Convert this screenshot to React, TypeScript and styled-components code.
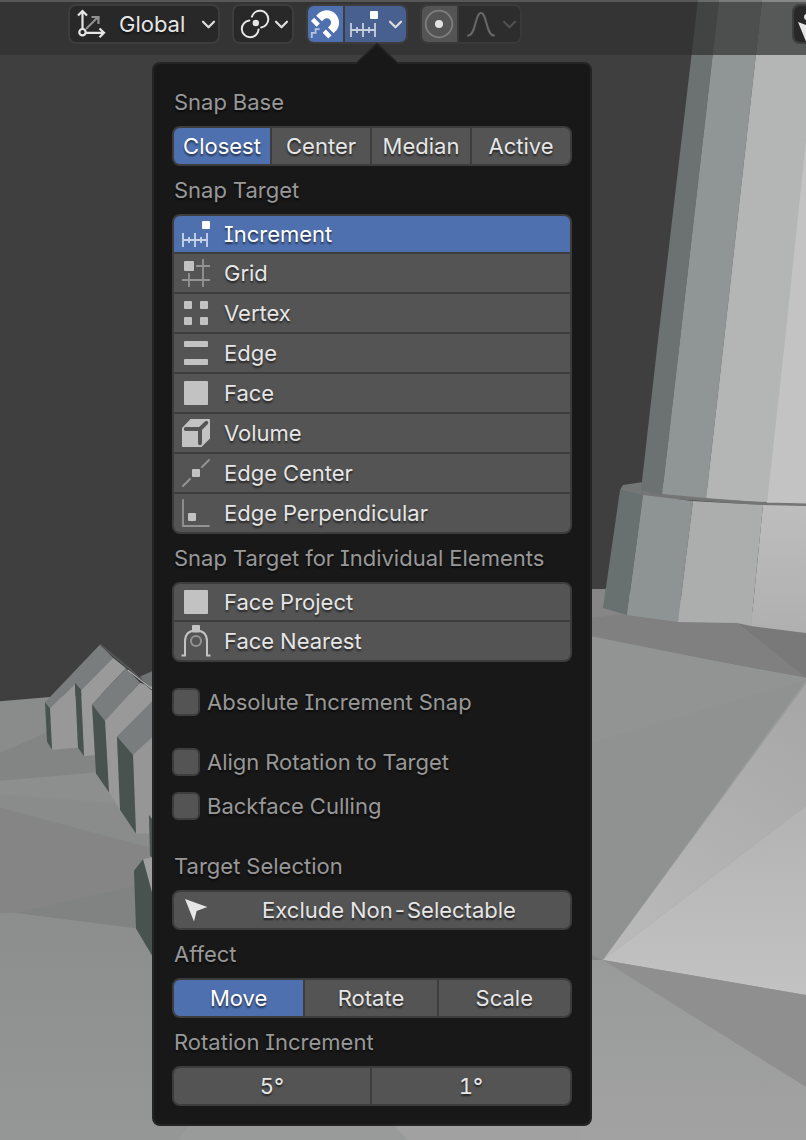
import React, { useState } from "react";
import styled, { createGlobalStyle, css } from "styled-components";

const GlobalStyle = createGlobalStyle`
  *, *::before, *::after { box-sizing: border-box; }
  body {
    margin: 0;
    background: #3f3f3f;
    font-family: Inter, "Liberation Sans", sans-serif;
    font-size: 22px;
    line-height: 28px;
    font-feature-settings: "tnum" 1, "cv08" 1;
    font-optical-sizing: auto;
    color: #e6e6e6;
  }
  button, input { font: inherit; font-feature-settings: inherit; color: inherit; }
`;

const outline = "#3d3d3d";
const accent = "#4f70af";
const field = "#545454";
const shadow = "0 2px 2px rgba(0, 0, 0, 0.6)";

const Page = styled.div`
  position: relative;
  isolation: isolate;
  min-height: 100vh;
  overflow: hidden;
`;

const SceneSvg = styled.svg`
  position: absolute;
  inset: 0;
  width: 100%;
  height: 100%;
  z-index: -1;
`;

const Toolbar = styled.header`
  display: flex;
  gap: 12px;
  height: 55px;
  padding: 2px 0 0 68px;
  border-top: 2px solid rgba(104, 104, 104, 0.6);
  background: rgba(48, 48, 48, 0.7);
  background-clip: padding-box;
`;

const ToolGroup = styled.div<{ $faded?: boolean }>`
  display: flex;
  flex: none;
  height: 40px;
  border: 2px solid ${(p) => (p.$faded ? "#3a3a3a" : outline)};
  border-radius: 8px;
  overflow: hidden;
  background: ${(p) => (p.$faded ? "#3a3a3a" : outline)};
  gap: 2px;
`;

const tones = {
  dark: "#282828",
  on: accent,
  onDim: "#47608f",
  off: field,
  disabled: "#2d2d2d",
};

const ToolButton = styled.button<{
  $tone: keyof typeof tones;
  $width: number;
  $pad: number;
  $gap?: number;
}>`
  display: flex;
  align-items: center;
  gap: ${(p) => p.$gap ?? 6}px;
  width: ${(p) => p.$width}px;
  padding: 0 3px 0 ${(p) => p.$pad}px;
  border: 0;
  background: ${(p) => tones[p.$tone]};
  text-shadow: ${shadow};
`;

const ToolText = styled.span`
  flex: 1;
  text-align: left;
`;

const OverflowGroup = styled(ToolGroup)`
  margin-left: auto;
  margin-right: -50px;
`;

const Popover = styled.section`
  position: relative;
  width: 440px;
  margin: 7px 0 14px 152px;
  padding: 18px;
  border: 2px solid #242424;
  border-radius: 8px;
  background: #181818;
  display: flex;
  flex-direction: column;
  gap: 4px;
`;

const PopoverArrow = styled.svg`
  position: absolute;
  left: 203px;
  top: -21px;
  width: 40px;
  height: 21px;
`;

const Label = styled.h2`
  margin: 0;
  height: 40px;
  padding-left: 2px;
  font-size: 22px;
  font-weight: 400;
  line-height: 40px;
  color: #989898;
  text-shadow: ${shadow};
`;

const Section = styled.div`
  display: flex;
  flex-direction: column;
  gap: 4px;
  margin-top: 16px;
`;

const Segments = styled.div`
  display: grid;
  grid-auto-flow: column;
  grid-auto-columns: minmax(0, 1fr);
  height: 40px;
`;

const segment = css`
  min-width: 0;
  padding: 0;
  border: solid ${outline};
  border-width: 2px 2px 2px 0;
  border-radius: 0;
  text-align: center;
  text-shadow: ${shadow};
  &:first-child {
    border-left-width: 2px;
    border-radius: 8px 0 0 8px;
  }
  &:last-child {
    border-radius: 0 8px 8px 0;
  }
`;

const SegmentButton = styled.button<{ $active: boolean }>`
  ${segment}
  background: ${(p) => (p.$active ? accent : field)};
  color: ${(p) => (p.$active ? "#ffffff" : "#e6e6e6")};
`;

const SegmentInput = styled.input`
  ${segment}
  background: ${field};
  outline: 0;
`;

const OptionList = styled.div`
  display: flex;
  flex-direction: column;
`;

const Option = styled.button<{ $active: boolean }>`
  display: flex;
  align-items: center;
  gap: 14px;
  height: 40px;
  padding: 0 8px;
  border: solid ${outline};
  border-width: 0 2px 2px;
  background: ${(p) => (p.$active ? accent : field)};
  color: ${(p) => (p.$active ? "#ffffff" : "#e6e6e6")};
  text-align: left;
  text-shadow: ${shadow};
  &:first-child {
    border-top-width: 2px;
    border-radius: 8px 8px 0 0;
  }
  &:last-child {
    border-radius: 0 0 8px 8px;
  }
`;

const CheckRow = styled.label`
  display: flex;
  align-items: center;
  gap: 7px;
  height: 40px;
  color: #989898;
  text-shadow: ${shadow};
`;

const Checkbox = styled.input`
  appearance: none;
  flex: none;
  width: 28px;
  height: 28px;
  margin: 0;
  border: 2px solid ${outline};
  border-radius: 6px;
  background: ${field};
  &:checked {
    background: ${accent};
  }
`;

const WideButton = styled.button`
  display: flex;
  align-items: center;
  height: 40px;
  padding: 0 2px 0 8px;
  border: 2px solid ${outline};
  border-radius: 8px;
  background: ${field};
  text-shadow: ${shadow};
`;

const WideText = styled.span`
  flex: 1;
  text-align: center;
`;

const IconSvg = styled.svg`
  flex: none;
  width: 28px;
  height: 28px;
  overflow: visible;
`;

const ChevronSvg = styled.svg`
  flex: none;
  width: 13px;
  height: 8px;
  overflow: visible;
`;

const Chevron = ({ color = "#dcdcdc" }: { color?: string }) => (
  <ChevronSvg viewBox="0 0 13 8" fill="none" stroke={color} strokeWidth="2.2" strokeLinecap="round" strokeLinejoin="round">
    <path d="M1 1.7 6.5 7.3 12 1.7" />
  </ChevronSvg>
);

const solid = "#c2c2c2";
const thin = "#939393";

const icons = {
  orientation: (
    <g fill="none" strokeWidth="2.2">
      <path d="M9 19 20.5 7.5M14.5 7h7v7" stroke="#8f8f8f" />
      <g stroke="#e6e6e6">
        <circle cx="5.5" cy="22.2" r="3.2" />
        <path d="M5.5 18.5V2M1 5.5 5.5 1 10 5.5M9.2 22.8H26M22.5 18.5 27 22.8 22.5 27.2" />
      </g>
    </g>
  ),
  pivot: (
    <g>
      <g fill="none" stroke="#e6e6e6" strokeWidth="2" strokeLinecap="round">
        <path d="M8.4 10.5A8.4 8.4 0 1 0 17.6 19.4" />
        <path d="M10.9 6.6A8.4 8.4 0 1 1 20.2 17.4" />
      </g>
      <circle cx="14.8" cy="13" r="3.2" fill="#e6e6e6" />
    </g>
  ),
  magnet: (
    <g fill="none" stroke="#fff">
      <path d="M8.1 8.5 9.9 6.7A8.3 8.3 0 0 1 21.6 18.5L19.8 20.3" strokeWidth="8" />
      <path d="M6 10.6 2.8 13.8M17.7 22.4 14.5 25.6" strokeWidth="8" />
      <path d="M.8 28V22.8H4.6V19.2H8.6" strokeWidth="1.8" opacity="0.6" />
    </g>
  ),
  increment: (
    <g>
      <rect x="20" y="1" width="8" height="8" rx="1" fill="#fff" />
      <path d="M1 13V27M13 13V27M25 13V27M1 20H25M7 17V23M19 17V23" stroke="#fff" strokeOpacity="0.7" strokeWidth="1.8" fill="none" />
    </g>
  ),
  proportional: (
    <g>
      <circle cx="14" cy="14" r="13.3" fill="none" stroke="#7e7e7e" strokeWidth="1.8" />
      <circle cx="14" cy="14" r="4" fill="#e2e2e2" />
    </g>
  ),
  falloff: (
    <path d="M1 25.5C9 25.5 8 3 14 3S19 25.5 27 25.5" fill="none" stroke="#686868" strokeWidth="2" strokeLinecap="round" />
  ),
  grid: (
    <g>
      <rect x="2" y="2" width="10" height="10" rx="1" fill={solid} />
      <path d="M21 0V28M14 7H28M7 14V28M0 21H28" stroke={thin} strokeWidth="1.8" />
    </g>
  ),
  vertex: (
    <g fill={solid}>
      <rect x="2" y="2" width="8" height="8" rx="1" />
      <rect x="18" y="2" width="8" height="8" rx="1" />
      <rect x="2" y="18" width="8" height="8" rx="1" />
      <rect x="18" y="18" width="8" height="8" rx="1" />
    </g>
  ),
  edge: (
    <g fill={solid}>
      <rect x="2" y="2" width="24" height="6" rx="0.8" />
      <rect x="2" y="20" width="24" height="6" rx="0.8" />
    </g>
  ),
  face: <rect x="2" y="2" width="24" height="24" rx="0.8" fill={solid} />,
  volume: (
    <g>
      <path d="M0 9 8.5 0H27.5L28 .5V19.5L19.5 28H.5L0 27.5Z" fill={solid} />
      <path d="M3.8 10H18V24.3M18 10 24.3 3.9" fill="none" stroke={field} strokeWidth="4" strokeLinecap="round" strokeLinejoin="round" />
    </g>
  ),
  edgeCenter: (
    <g>
      <path d="M1 27 8 20M20 8 27 1" stroke={thin} strokeWidth="2" strokeLinecap="round" />
      <rect x="10" y="10" width="8" height="8" rx="1" fill={solid} />
    </g>
  ),
  edgePerpendicular: (
    <g>
      <path d="M1 1V27H27" fill="none" stroke={thin} strokeWidth="1.8" strokeLinecap="round" />
      <rect x="6" y="14" width="8" height="8" rx="1" fill={solid} />
    </g>
  ),
  faceNearest: (
    <g fill="none" stroke={solid} strokeWidth="2">
      <path d="M-.5 28.4H3V14.5Q3 3.5 14 3.5T25 14.5V28.4H28.5" />
      <circle cx="14" cy="14" r="5" stroke={thin} />
      <rect x="10" y="-2" width="8" height="7.5" rx="1" fill={solid} stroke="none" />
    </g>
  ),
  pointer: <path d="M3 3 25.4 11 14.6 15 12 25.4Z" fill="#e6e6e6" />,
  visibility: (
    <g fill="#e6e6e6">
      <path d="M0 12 22 20.5 11.5 24.5 9 34Z" />
      <circle cx="9" cy="7" r="3" />
    </g>
  ),
};

const Icon = ({ name }: { name: keyof typeof icons }) => (
  <IconSvg viewBox="0 0 28 28" aria-hidden="true">
    {icons[name]}
  </IconSvg>
);

const Scene = () => (
  <SceneSvg viewBox="0 0 806 1140" preserveAspectRatio="xMidYMin slice" aria-hidden="true">
    <defs>
      <linearGradient id="groundLeft" x1="0" y1="900" x2="0" y2="1140" gradientUnits="userSpaceOnUse">
        <stop offset="0" stopColor="#8c8e8d" />
        <stop offset="1" stopColor="#969897" />
      </linearGradient>
      <linearGradient id="groundRight" x1="0" y1="960" x2="0" y2="1140" gradientUnits="userSpaceOnUse">
        <stop offset="0" stopColor="#999b9a" />
        <stop offset="1" stopColor="#a1a2a1" />
      </linearGradient>
      <linearGradient id="lit" x1="806" y1="684" x2="640" y2="940" gradientUnits="userSpaceOnUse">
        <stop offset="0" stopColor="#a5a6a5" />
        <stop offset="1" stopColor="#b8b9b8" />
      </linearGradient>
      <linearGradient id="litLow" x1="0" y1="820" x2="0" y2="990" gradientUnits="userSpaceOnUse">
        <stop offset="0" stopColor="#b4b4b4" />
        <stop offset="1" stopColor="#c2c2c2" />
      </linearGradient>
      <linearGradient id="base" x1="0" y1="500" x2="0" y2="630" gradientUnits="userSpaceOnUse">
        <stop offset="0" stopColor="#bebebe" />
        <stop offset="1" stopColor="#b0b0b0" />
      </linearGradient>
    </defs>
    <rect width="806" height="1140" fill="#3f3f3f" />

    <g transform="translate(0 -20) scale(1 1.0333)">
      <path d="M0 698 50 694 152 690V1140H0Z" fill="#8a8c8b" />
      <path d="M0 748 47 728 152 720V775H0Z" fill="#838584" />
      <path d="M0 775 96 767 152 770V840L0 801Z" fill="#8d8f8e" />
      <path d="M0 788 120 797 152 805V840L0 801Z" fill="#8a8c8b" />
      <path d="M0 801 152 840V905L15 903H0Z" fill="#858585" />
      <path d="M15 903 134 877 152 880V920L136 918Z" fill="#818282" />
      <path d="M0 903H15L136 918 600 970V1140H0Z" fill="url(#groundLeft)" />

      <path d="M140 674 152 669V690Z" fill="#707373" />
      <path d="M45 699 100 643 113 656 81 687 75 681 50 705Z" fill="#797d7d" />
      <path d="M50 705 75 681 78 743 52 745Z" fill="#989898" />
      <path d="M45 699 50 705 52 745 47 737Z" fill="#48524f" />
      <path d="M113 656 126 666 92 701 95 750 84 751 81 687Z" fill="#9a9a9a" />
      <path d="M75 680 81 687 84 751 78 743Z" fill="#48524f" />
      <path d="M126 666 140 680 105 717 92 701Z" fill="#797d7d" />
      <path d="M140 680 152 684V700L117 732 120 803 109 786 105 717Z" fill="#999" />
      <path d="M92 701 105 717 109 786 96 768Z" fill="#48524f" />
      <path d="M152 698V733L133 750 117 732Z" fill="#797d7d" />
      <path d="M133 750 152 733V826H136Z" fill="#969696" />
      <path d="M117 732 133 750 136 826 120 803Z" fill="#48524f" />
      <path d="M149 808 152 812V850L150 847Z" fill="#48524f" />
      <path d="M143 851 152 849V884Z" fill="#a0a0a0" />
      <path d="M134 862 143 851 152 883V944L136 918Z" fill="#48524f" />
      <path d="M100 643 130 667 152 687" fill="none" stroke="#555858" strokeWidth="1.5" />
      <path d="M128 668 152 686" fill="none" stroke="#b0b0b0" strokeWidth="1" />
    </g>
    <path d="M178 1140 200 1110H380L407 1140Z" fill="#999b9a" />
    <path d="M380 1110 407 1140H620V1110Z" fill="#a0a1a0" />

    <path d="M580 589 620 590 806 620V1140H580Z" fill="url(#groundRight)" />
    <path d="M592 589H620L640 616 592 619Z" fill="#858685" />
    <path d="M580 620 627 613 740 620 806 678 580 636Z" fill="#7f807f" />
    <path d="M737 622 806 630V678Z" fill="#797979" />
    <path d="M580 634 806 679V682L580 746Z" fill="#929493" />
    <path d="M580 746 806 680 603 960 580 950Z" fill="#909291" />
    <path d="M580 950 603 960H580Z" fill="#868786" />
    <path d="M806 684V806L603 960Z" fill="url(#lit)" />
    <path d="M806 806V995L603 960Z" fill="url(#litLow)" />
    <path d="M603 960 806 995V1087Z" fill="#8f8f8f" />

    <path d="M620 490 623 485 650 481 806 500V508L643 497Z" fill="#747575" />
    <path d="M698 0H719L680 340 662 495 641 490 658 340Z" fill="#6b7271" />
    <path d="M719 0H762L724 340 706 499 662 495 680 340Z" fill="#909696" />
    <path d="M762 0H806V504L706 499 724 340Z" fill="#b3b6b5" />
    <path d="M806 140V504L767 503 785 340Z" fill="#c3c3c3" />
    <path d="M620 490 643 495 627 615 603 608Z" fill="#687070" />
    <path d="M643 495 693 501 678 622 627 615Z" fill="#8e9494" />
    <path d="M693 501 763 505 751 626 737 623 678 622Z" fill="#acaeae" />
    <path d="M763 505 806 506V633L751 626Z" fill="url(#base)" />
    <path d="M662 495 706 499 767 503.5 806 504.5" fill="none" stroke="#747575" strokeWidth="1.8" />
  </SceneSvg>
);

type SegmentedProps = { label: string; options: string[] };

const Segmented = ({ label, options }: SegmentedProps) => {
  const [value, setValue] = useState(options[0]);
  return (
    <Segments role="group" aria-label={label}>
      {options.map((o) => (
        <SegmentButton key={o} type="button" aria-pressed={o === value} $active={o === value} onClick={() => setValue(o)}>
          {o}
        </SegmentButton>
      ))}
    </Segments>
  );
};

type Target = { name: string; icon: keyof typeof icons };

const targets: Target[] = [
  { name: "Increment", icon: "increment" },
  { name: "Grid", icon: "grid" },
  { name: "Vertex", icon: "vertex" },
  { name: "Edge", icon: "edge" },
  { name: "Face", icon: "face" },
  { name: "Volume", icon: "volume" },
  { name: "Edge Center", icon: "edgeCenter" },
  { name: "Edge Perpendicular", icon: "edgePerpendicular" },
];

const individualTargets: Target[] = [
  { name: "Face Project", icon: "face" },
  { name: "Face Nearest", icon: "faceNearest" },
];

const TargetList = ({ label, items, initial }: { label: string; items: Target[]; initial?: string }) => {
  const [value, setValue] = useState(initial);
  return (
    <OptionList role="group" aria-label={label}>
      {items.map((t) => (
        <Option key={t.name} type="button" aria-pressed={t.name === value} $active={t.name === value} onClick={() => setValue(t.name)}>
          <Icon name={t.icon} />
          {t.name}
        </Option>
      ))}
    </OptionList>
  );
};

const CheckItem = ({ children }: { children: React.ReactNode }) => (
  <CheckRow>
    <Checkbox type="checkbox" />
    {children}
  </CheckRow>
);

export default function App() {
  return (
    <Page>
      <GlobalStyle />
      <Scene />
      <Toolbar>
        <ToolGroup>
          <ToolButton type="button" $tone="dark" $width={148} $pad={7} $gap={14}>
            <Icon name="orientation" />
            <ToolText>Global</ToolText>
            <Chevron />
          </ToolButton>
        </ToolGroup>
        <ToolGroup>
          <ToolButton type="button" aria-label="Pivot point" $tone="dark" $width={58} $pad={7}>
            <Icon name="pivot" />
            <Chevron />
          </ToolButton>
        </ToolGroup>
        <ToolGroup>
          <ToolButton type="button" aria-label="Snap" aria-pressed="true" $tone="on" $width={35} $pad={3}>
            <Icon name="magnet" />
          </ToolButton>
          <ToolButton type="button" aria-label="Snapping options" $tone="onDim" $width={61} $pad={5} $gap={11}>
            <Icon name="increment" />
            <Chevron />
          </ToolButton>
        </ToolGroup>
        <ToolGroup $faded>
          <ToolButton type="button" aria-label="Proportional editing" $tone="off" $width={35} $pad={3}>
            <Icon name="proportional" />
          </ToolButton>
          <ToolButton type="button" aria-label="Proportional falloff" $tone="disabled" $width={61} $pad={8} $gap={8}>
            <Icon name="falloff" />
            <Chevron color="#505050" />
          </ToolButton>
        </ToolGroup>
        <OverflowGroup>
          <ToolButton type="button" aria-label="Object visibility" $tone="dark" $width={60} $pad={4}>
            <Icon name="visibility" />
          </ToolButton>
        </OverflowGroup>
      </Toolbar>

      <Popover aria-label="Snapping">
        <PopoverArrow viewBox="0 0 40 21" aria-hidden="true">
          <path d="M0 19 20 0 40 19V21H0Z" fill="#181818" />
          <path d="M0 19.5 20 .8 40 19.5" fill="none" stroke="#242424" strokeWidth="1.6" />
        </PopoverArrow>

        <Label>Snap Base</Label>
        <Segmented label="Snap Base" options={["Closest", "Center", "Median", "Active"]} />

        <Label>Snap Target</Label>
        <TargetList label="Snap Target" items={targets} initial="Increment" />

        <Label>Snap Target for Individual Elements</Label>
        <TargetList label="Snap Target for Individual Elements" items={individualTargets} />

        <Section>
          <CheckItem>Absolute Increment Snap</CheckItem>
        </Section>
        <Section>
          <CheckItem>Align Rotation to Target</CheckItem>
          <CheckItem>Backface Culling</CheckItem>
        </Section>

        <Section>
          <Label>Target Selection</Label>
          <WideButton type="button">
            <Icon name="pointer" />
            <WideText>Exclude Non-Selectable</WideText>
          </WideButton>
          <Label>Affect</Label>
          <Segmented label="Affect" options={["Move", "Rotate", "Scale"]} />
          <Label>Rotation Increment</Label>
          <Segments role="group" aria-label="Rotation Increment">
            <SegmentInput type="text" aria-label="Rotation increment" defaultValue="5°" />
            <SegmentInput type="text" aria-label="Precision rotation increment" defaultValue="1°" />
          </Segments>
        </Section>
      </Popover>
    </Page>
  );
}
